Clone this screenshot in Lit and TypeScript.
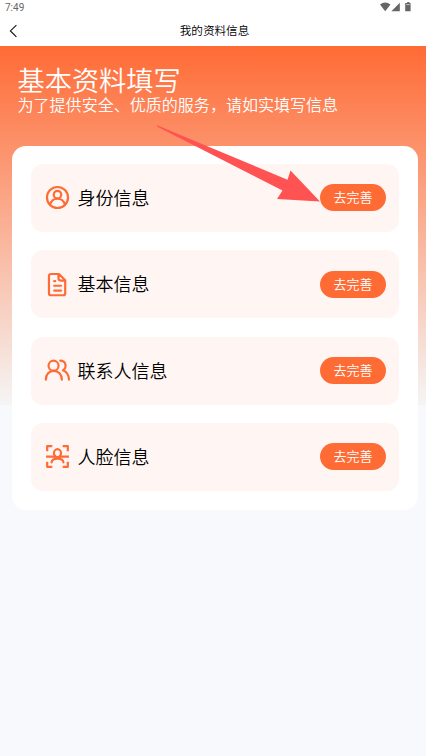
import { LitElement, html, css, svg } from "lit";
import { customElement } from "lit/decorators.js";

const icons = {
  identity: svg`<circle cx="12" cy="12" r="10.1"/><circle cx="12" cy="9.3" r="3.6"/><path d="M4.8 19C5.8 15.2 8.6 13.2 12 13.2s6.2 2 7.2 5.8"/>`,
  basic: svg`<path d="M13.4 1.9H5.8q-2 0-2 2v16.4q0 2 2 2h11.6q2 0 2-2V8zM12.9 2.2v3.6q0 2.4 2.4 2.4h3.8M8.8 8.8h1M8.8 13.2h6.6M8.8 17.8h6.6"/>`,
  contact: svg`<circle cx="8.2" cy="7.4" r="4.8"/><path d="M0.8 20.8C0.8 15.6 4 12.4 8.4 12.4s7.8 3.2 7.8 8.4M14.6 2.6c5.6 0 6.8 6.4 2.6 9.2 3.6 1.4 5.6 4.6 5.8 9"/>`,
  face: svg`<path stroke-linecap="butt" d="M2.1 7V2.1H7M17 2.1h4.9V7M21.9 17v4.9H17M7 21.9H2.1V17M1 12.1h8.5M14.5 12.1H23"/><ellipse cx="12" cy="8.8" rx="3.4" ry="3.8"/><path d="M9.8 11.4v1.9M14.2 11.4v1.9M6.3 17.7C6.5 15.1 9 14 12 14s5.5 1.1 5.7 3.7"/>`,
};

const sections = [
  { label: "身份信息", icon: icons.identity },
  { label: "基本信息", icon: icons.basic },
  { label: "联系人信息", icon: icons.contact },
  { label: "人脸信息", icon: icons.face },
];

@customElement("app-root")
export class AppRoot extends LitElement {
  static styles = css`
    :host {
      display: block;
      position: relative;
      height: 756px;
      overflow: hidden;
      background: #f8f9fc;
      color: #000;
      font-family: "Noto Sans CJK SC", sans-serif;
      font-weight: 350;
    }
    * { box-sizing: border-box; }
    .status {
      height: 16px;
      padding: 0 14px 0 5px;
      display: flex;
      align-items: center;
      justify-content: space-between;
      background: #fff;
      color: #666;
      font: 10px/16px Roboto, sans-serif;
    }
    .signals { display: block; margin-top: -2px; }
    .nav {
      height: 30px;
      display: grid;
      grid-template-columns: 28px 1fr 28px;
      align-items: center;
      background: #fff;
      font-size: 11.6px;
      text-align: center;
    }
    .back { display: block; margin-left: 9px; }
    .title { padding: 0 0 2px 3px; }
    .hero {
      height: 359px;
      padding: 16px 12px 0;
      background: linear-gradient(#ff6b35, #f5f5f5);
    }
    h1 {
      margin: 0 0 0 5.5px;
      color: #fff;
      font-size: 27.2px;
      font-weight: 350;
      line-height: 34px;
    }
    .hint {
      margin: -1px 0 0 5.5px;
      color: #fff;
      font-size: 16.05px;
      line-height: 18px;
      white-space: nowrap;
    }
    .card {
      width: 406px;
      height: 364.5px;
      margin-top: 32.5px;
      padding: 18.3px 19px 18px 18.5px;
      border-radius: 14px;
      background: #fff;
      display: flex;
      flex-direction: column;
      gap: 18.4px;
    }
    .row {
      height: 68px;
      flex: none;
      padding: 0 13px 0 14px;
      border-radius: 12px;
      background: #fff6f4;
      display: flex;
      align-items: center;
    }
    .icon {
      width: 25px;
      height: 25px;
      flex: none;
      overflow: visible;
      fill: none;
      stroke: #ff6b35;
      stroke-width: 2.1;
      stroke-linecap: round;
      stroke-linejoin: round;
    }
    .label { flex: 1; margin-left: 8px; padding-bottom: 2px; font-size: 18px; line-height: 26px; }
    button {
      width: 66px;
      height: 27px;
      padding: 0 0 2px;
      border: 0;
      border-radius: 14px;
      background: #ff6b35;
      color: #fff;
      font: 350 13px/25px "Noto Sans CJK SC", sans-serif;
    }
    .pointer { position: absolute; left: 150px; top: 120px; pointer-events: none; }
  `;

  render() {
    return html`
      <div class="status">
        <span>7:49</span>
        <svg class="signals" width="32" height="10" viewBox="0 0 32 10" fill="#666">
          <path d="M0 2.4Q5 -1.3 10.5 2.4L5.2 9.3z" />
          <path d="M19.8 .7v8.6h-8.4z" />
          <path d="M26.2 1h1V.1h2.2V1h1.2v8.3h-5.4V1z" />
          <path d="M26.2 2.6h3.5" stroke="#ccc" stroke-width=".9" />
        </svg>
      </div>
      <nav class="nav">
        <svg class="back" width="10" height="14" viewBox="0 0 10 14" fill="none" stroke="#111" stroke-width="1.1">
          <path d="M7.4 1.2L1.4 6.9l6 6" />
        </svg>
        <span class="title">我的资料信息</span>
      </nav>
      <main class="hero">
        <h1>基本资料填写</h1>
        <p class="hint">为了提供安全、优质的服务，请如实填写信息</p>
        <section class="card">
          ${sections.map(
            (s) => html`<div class="row">
              <svg class="icon" viewBox="0 0 24 24">${s.icon}</svg>
              <span class="label">${s.label}</span>
              <button>去完善</button>
            </div>`
          )}
        </section>
      </main>
      <svg class="pointer" width="175" height="90" viewBox="150 120 175 90" fill="#ff5252">
        <path d="M157 125.2L287.5 179.8L290.5 170.5L320 201.5L277 199L282.5 190.5L157 126.4z" />
      </svg>
    `;
  }
}
